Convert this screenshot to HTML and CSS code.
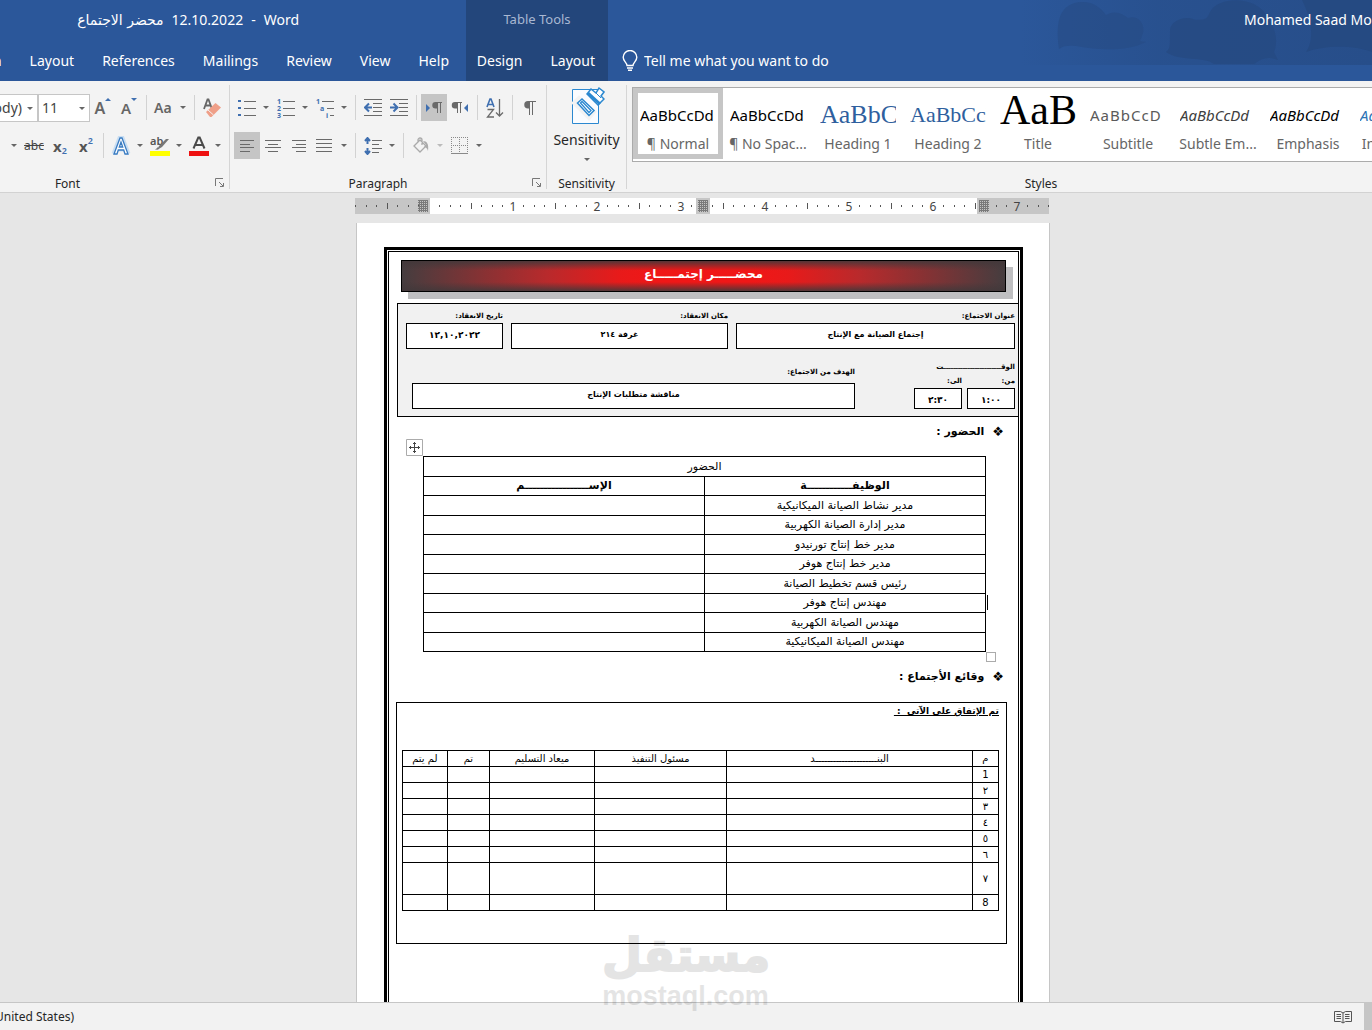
FILE: index.html
```html
<!DOCTYPE html>
<html lang="en">
<head>
    <meta charset="UTF-8">
    <meta name="viewport" content="width=device-width, initial-scale=1.0">
    <title>محضر الاجتماع 12.10.2022 - Word</title>
    <link rel="stylesheet" href="styles.css">
</head>
<body>
    <header class="header">
        <div class="header-left">
            <div class="doc-title">
                <span class="ar" dir="rtl">محضر الاجتماع</span>
                <span>12.10.2022</span>
                <span>-</span>
                <span>Word</span>
            </div>
            <nav class="tabs">
                <a href="#">Design</a>
                <a href="#">Layout</a>
                <a href="#">References</a>
                <a href="#">Mailings</a>
                <a href="#">Review</a>
                <a href="#">View</a>
                <a href="#">Help</a>
            </nav>
        </div>
        <div class="header-tools">
            <div class="tools-title">Table Tools</div>
            <nav class="tabs">
                <a href="#">Design</a>
                <a href="#">Layout</a>
            </nav>
        </div>
        <div class="header-right">
            <svg class="clouds" width="352" height="65" viewBox="0 0 352 65">
                <defs>
                    <linearGradient id="fade" x1="0" x2="1" y1="0" y2="0">
                        <stop offset="0" stop-color="#274e8a" stop-opacity="0"/>
                        <stop offset="0.4" stop-color="#274e8a" stop-opacity=".7"/>
                        <stop offset="1" stop-color="#274e8a"/>
                    </linearGradient>
                </defs>
                <rect width="352" height="65" fill="url(#fade)"/>
                <g fill="#254a82">
                    <path opacity=".5" d="M39 49C35 20 40 3 62 2c14 0 20 8 24 13 10-6 18 0 22 3 14-4 18 12 14 18-2 6-4 5 4 6-20 10-50 8-70 4-8-1-14 0-17 3z"/>
                    <path opacity=".8" d="M150 30c0-8 14-16 26-10 8-1 10 1 14-8 8-16 50-18 60 10 6 8 8 20 4 30l4 8c-10-4-16-2-24 4h-40c-10-8-34-2-48-12 4-4 4-4 4-22z"/>
                    <path d="M286 52c10-14 4-36-4-52h70v52c-20-8-50-6-66 0z"/>
                </g>
            </svg>
            <div class="user">Mohamed Saad Mohamed</div>
            <label class="tell">
                <svg width="16" height="22" viewBox="0 0 16 22" fill="none" stroke="#fff" stroke-width="1.4">
                    <path d="M5 15.500c0-3-3.800-4-3.800-8.200a6.800 6.800 0 0 1 13.600 0c0 4.200-3.800 5.200-3.800 8.200zM5 18h6M6 20.300h4"/>
                </svg>
                <input type="text" placeholder="Tell me what you want to do">
            </label>
        </div>
    </header>

    <section class="ribbon">
        <div class="group group-font">
            <div class="rows">
                <div class="tool-row">
                    <label class="combo combo-font"><select aria-label="Font"><option>Calibri (Body)</option></select><i class="caret"></i></label>
                    <label class="combo combo-size"><select aria-label="Font size"><option>11</option></select><i class="caret"></i></label>
                    <button class="tool letter" aria-label="Grow font">A<svg class="tick" width="6" height="3"><path d="M0 3L3 0l3 3z" fill="#3f6fb0"/></svg></button>
                    <button class="tool letter small" aria-label="Shrink font">A<svg class="tick" width="6" height="3"><path d="M0 0h6L3 3z" fill="#3f6fb0"/></svg></button>
                    <span class="sep"></span>
                    <button class="tool wide case">Aa<i class="caret"></i></button>
                    <span class="sep"></span>
                    <button class="tool" aria-label="Clear formatting">
                        <svg width="20" height="20" viewBox="0 0 20 20"><path d="M2 11L5.500 1.500h1L10 11M3.500 7.500h5" fill="none" stroke="#666" stroke-width="1.800"/><path d="M4 14L13.500 5l5.500 4.500-9.500 9.500H8z" fill="#ef9f88"/><path d="M6 12l5.500 5" stroke="#f3f3f3"/></svg>
                    </button>
                </div>
                <div class="tool-row">
                    <button class="tool wide under"><u>U</u><i class="caret"></i></button>
                    <button class="tool strike"><s>abc</s></button>
                    <button class="tool script">x<sub>2</sub></button>
                    <button class="tool script">x<sup>2</sup></button>
                    <span class="sep"></span>
                    <button class="tool wide" aria-label="Text effects">
                        <svg width="20" height="20" viewBox="0 0 20 20"><path d="M3 18L9 2h2l6 16M6 13h8" fill="none" stroke="#c9def2" stroke-width="5"/><path d="M3 18L9 2h2l6 16h-3l-1.300-4H7.300L6 18zM8.300 11h3.400L10 6z" fill="#fff" stroke="#3a7cc2" stroke-width="1.300"/></svg>
                        <i class="caret"></i>
                    </button>
                    <button class="tool wide" aria-label="Highlight color">
                        <svg width="20" height="20" viewBox="0 0 20 20"><text x="0" y="9" class="ico-ab">ab</text><path d="M19 3l-7 8-5 3 2-4 7-7z" fill="#777"/><path d="M5 14l3-3 1 2z" fill="#777"/><path d="M0 15h20v5H0z" fill="#ffff00"/></svg>
                        <i class="caret"></i>
                    </button>
                    <button class="tool wide" aria-label="Font color">
                        <svg width="20" height="20" viewBox="0 0 20 20"><path d="M4.500 12.500L9.300 1.500h1.400l4.800 11M6.500 9h7" fill="none" stroke="#4a4a4a" stroke-width="2"/><path d="M0 15h20v5H0z" fill="#ee1111"/></svg>
                        <i class="caret"></i>
                    </button>
                </div>
            </div>
            <div class="group-name">Font
                <svg class="launch" width="10" height="10" viewBox="0 0 10 10"><path d="M.5 8V.5H8M4 4l4 4M8.500 5v3.500H5" fill="none" stroke="#777"/></svg>
            </div>
        </div>

        <div class="group group-para">
            <div class="rows">
                <div class="tool-row">
                    <button class="tool wide" aria-label="Bullets">
                        <svg width="18" height="18" viewBox="0 0 18 18"><path d="M0 1h3v2H0zM0 8h3v2H0zM0 15h3v2H0z" fill="#3f6fb0"/><path d="M6 2.500h12M6 9.500h12M6 16.500h12" stroke="#6a6a6a"/></svg>
                        <i class="caret"></i>
                    </button>
                    <button class="tool wide" aria-label="Numbering">
                        <svg width="18" height="20" viewBox="0 0 18 20"><g class="ico-num"><text x="0" y="6">1</text><text x="0" y="13">2</text><text x="0" y="20">3</text></g><path d="M6 3.500h12M6 10.500h12M6 17.500h12" stroke="#6a6a6a"/></svg>
                        <i class="caret"></i>
                    </button>
                    <button class="tool wide" aria-label="Multilevel list">
                        <svg width="18" height="20" viewBox="0 0 18 20"><g class="ico-num"><text x="0" y="6">1</text><text x="4" y="13">a</text><text x="10" y="20">i</text></g><path d="M6 3.500h12M11 10.500h7M14 17.500h4" stroke="#6a6a6a"/></svg>
                        <i class="caret"></i>
                    </button>
                    <span class="sep"></span>
                    <button class="tool" aria-label="Decrease indent">
                        <svg width="18" height="17" viewBox="0 0 18 17"><path d="M0 .5h18M9 4.500h9M9 8.500h9M9 12.500h9M0 16.500h18" stroke="#6a6a6a"/><path d="M8 8.500H2M5 4.500l-4 4 4 4" fill="none" stroke="#3f6fb0" stroke-width="2"/></svg>
                    </button>
                    <button class="tool" aria-label="Increase indent">
                        <svg width="18" height="17" viewBox="0 0 18 17"><path d="M0 .5h18M9 4.500h9M9 8.500h9M9 12.500h9M0 16.500h18" stroke="#6a6a6a"/><path d="M0 8.500h6M3.500 4.500l4 4-4 4" fill="none" stroke="#3f6fb0" stroke-width="2"/></svg>
                    </button>
                    <span class="sep"></span>
                    <button class="tool on" aria-label="Left to right">
                        <svg width="18" height="14" viewBox="0 0 18 14"><path d="M1 3l4 4-4 4z" fill="#3f6fb0"/><path d="M13 1h-2.500a3 3 0 0 0 0 6.500H13z" fill="#6a6a6a"/><path d="M12.500 1v11M15.500 1v11M11 1.500h6" stroke="#6a6a6a"/></svg>
                    </button>
                    <button class="tool" aria-label="Right to left">
                        <svg width="18" height="14" viewBox="0 0 18 14"><path d="M17 3l-4 4 4 4z" fill="#3f6fb0"/><path d="M6 1H4a3 3 0 0 0 0 6.500h2z" fill="#6a6a6a"/><path d="M6.500 1v11M9.500 1v11M4 1.500h7" stroke="#6a6a6a"/></svg>
                    </button>
                    <span class="sep"></span>
                    <button class="tool" aria-label="Sort">
                        <svg width="18" height="20" viewBox="0 0 18 20"><path d="M1 9L4 1h1l3 8M2 6.500h5" fill="none" stroke="#3f6fb0" stroke-width="1.600"/><path d="M1.500 11.500h6l-6 7.500h6.500M13.500 1v17M10 14.500l3.500 3.500 3.500-3.500" fill="none" stroke="#6a6a6a" stroke-width="1.300"/></svg>
                    </button>
                    <span class="sep"></span>
                    <button class="tool" aria-label="Show marks">
                        <svg width="12" height="16" viewBox="0 0 12 16"><path d="M6 1H4a3.500 3.500 0 0 0 0 7.500h2z" fill="#6a6a6a"/><path d="M5.500 1v14M8.500 1v14M4 1.500h8" stroke="#6a6a6a"/></svg>
                    </button>
                </div>
                <div class="tool-row">
                    <button class="tool on" aria-label="Align left">
                        <svg width="16" height="12" viewBox="0 0 16 12"><path d="M1 .5h14M1 4.500h10M1 7.500h14M1 11.500h10" stroke="#6a6a6a"/></svg>
                    </button>
                    <button class="tool" aria-label="Center">
                        <svg width="16" height="12" viewBox="0 0 16 12"><path d="M0 .5h16M3 4.500h10M0 7.500h16M3 11.500h10" stroke="#6a6a6a"/></svg>
                    </button>
                    <button class="tool" aria-label="Align right">
                        <svg width="16" height="12" viewBox="0 0 16 12"><path d="M1 .5h14M5 4.500h10M1 7.500h14M5 11.500h10" stroke="#6a6a6a"/></svg>
                    </button>
                    <button class="tool wide" aria-label="Justify">
                        <svg width="16" height="13" viewBox="0 0 16 13"><path d="M0 .5h16M0 4.500h16M0 8.500h16M0 12.500h16" stroke="#6a6a6a"/></svg>
                        <i class="caret"></i>
                    </button>
                    <span class="sep"></span>
                    <button class="tool wide" aria-label="Line spacing">
                        <svg width="18" height="18" viewBox="0 0 18 18"><path d="M3.500 1v6M1 4l2.500-3L6 4M3.500 11v6M1 14l2.500 3L6 14" fill="none" stroke="#3f6fb0" stroke-width="2"/><path d="M8 3.500h10M8 7.500h7M8 11.500h10M8 15.500h7" stroke="#6a6a6a"/></svg>
                        <i class="caret"></i>
                    </button>
                    <span class="sep"></span>
                    <button class="tool wide dim" aria-label="Shading">
                        <svg width="18" height="18" viewBox="0 0 18 18"><path d="M2 9l6-6 6 6-6 6zM6 6V3a2 2 0 0 1 4 0v5" fill="none" stroke="#aaa" stroke-width="1.300"/><path d="M11 4c4 0 6 3 5 10-1-3-2-4-4-4l2-2z" fill="#aaa"/></svg>
                        <i class="caret"></i>
                    </button>
                    <button class="tool wide" aria-label="Borders">
                        <svg width="18" height="18" viewBox="0 0 18 18"><path d="M.5 0v17M8.500 0v17M16.500 0v17M0 .5h17M0 8.500h17" stroke="#8a8a8a" stroke-dasharray="1 1"/><path d="M0 16.500h17" stroke="#8a8a8a"/></svg>
                        <i class="caret"></i>
                    </button>
                </div>
            </div>
            <div class="group-name">Paragraph
                <svg class="launch" width="10" height="10" viewBox="0 0 10 10"><path d="M.5 8V.5H8M4 4l4 4M8.500 5v3.500H5" fill="none" stroke="#777"/></svg>
            </div>
        </div>

        <div class="group group-sens">
            <button class="big">
                <svg width="36" height="40" viewBox="0 0 36 40" fill="none" stroke="#2b88d0">
                    <path d="M3.500 3.500h26v34h-26z" fill="#fafcff"/>
                    <path d="M5 17l5-5 15 14-5 6z" fill="#fff" stroke="#f3f3f3" stroke-width="4"/>
                    <path d="M8.500 17l4.500-4 12 11.500-5 5z" fill="#fff" stroke-width="1.500"/>
                    <path d="M11.500 17l1.500-1.500 9 9-2 2z" stroke-width="1.300"/>
                    <path d="M18 8l4-5 5 4 3-5 5 4-3 4 3 3-6 6z" fill="#fff" stroke-width="1.500"/>
                    <path d="M19 7l12 11" stroke-width="3"/>
                    <path d="M27 7l5 5"/>
                </svg>
                <span>Sensitivity</span>
                <i class="caret"></i>
            </button>
            <div class="group-name">Sensitivity</div>
        </div>

        <div class="group group-styles">
            <div class="gallery">
                <button class="style on"><span class="sample">AaBbCcDd</span><span class="name">¶ Normal</span></button>
                <button class="style"><span class="sample">AaBbCcDd</span><span class="name">¶ No Spac...</span></button>
                <button class="style"><span class="sample h1">AaBbC</span><span class="name">Heading 1</span></button>
                <button class="style"><span class="sample h2">AaBbCcD</span><span class="name">Heading 2</span></button>
                <button class="style"><span class="sample ttl">AaB</span><span class="name">Title</span></button>
                <button class="style"><span class="sample sub">AaBbCcD</span><span class="name">Subtitle</span></button>
                <button class="style"><span class="sample em soft">AaBbCcDd</span><span class="name">Subtle Em...</span></button>
                <button class="style"><span class="sample em">AaBbCcDd</span><span class="name">Emphasis</span></button>
                <button class="style"><span class="sample em blue">AaBbCcDd</span><span class="name">Intense E...</span></button>
            </div>
            <div class="group-name">Styles</div>
        </div>
    </section>

    <main class="workspace">
        <svg class="ruler" width="696" height="16" viewBox="0 0 696 16">
            <defs>
                <pattern id="ticks" x="74" width="84" height="16" patternUnits="userSpaceOnUse">
                    <path d="M10.500 7v2M21.500 7v2M31.500 7v2M42.500 5v6M52.500 7v2M63.500 7v2M73.500 7v2" stroke="#555"/>
                </pattern>
                <pattern id="mesh" width="2" height="2" patternUnits="userSpaceOnUse">
                    <path d="M0 0h1v2H0zM1 0h1v1H1z" fill="#7a7a7a"/>
                </pattern>
            </defs>
            <rect width="694" height="16" fill="#c6c6c6"/>
            <rect x="75" width="266" height="16" fill="#fff"/>
            <rect x="355" width="267" height="16" fill="#fff"/>
            <rect width="694" height="16" fill="url(#ticks)"/>
            <g>
                <rect x="67" y="2" width="11" height="12" fill="#c6c6c6"/><rect x="341" width="14" height="16" fill="#c6c6c6"/><rect x="622" width="13" height="16" fill="#c6c6c6"/>
                <rect x="75" width="3" height="16" fill="#fff"/>
                <rect x="63" y="2" width="10" height="12" fill="url(#mesh)"/><rect x="343" y="2" width="10" height="12" fill="url(#mesh)"/><rect x="624" y="2" width="10" height="12" fill="url(#mesh)"/>
            </g>
            <g class="ruler-num">
                <text x="158" y="13">1</text><text x="242" y="13">2</text><text x="326" y="13">3</text><text x="410" y="13">4</text><text x="494" y="13">5</text><text x="578" y="13">6</text><text x="662" y="13">7</text>
            </g>
        </svg>

        <article class="page" lang="ar" dir="rtl">
            <div class="frame">
                <div class="frame-inner">
                    <h1 class="banner">محضـــــر إجتمـــــاع</h1>

                    <div class="info">
                        <div class="info-row">
                            <div class="field f-title"><div class="lbl">عنوان الاجتماع:</div><div class="box">إجتماع الصيانة مع الإنتاج</div></div>
                            <div class="field f-place"><div class="lbl">مكان الانعقاد:</div><div class="box">غرفة ٢١٤</div></div>
                            <div class="field f-date"><div class="lbl">تاريخ الانعقاد:</div><div class="box">١٢,١٠,٢٠٢٢</div></div>
                        </div>
                        <div class="info-row second">
                            <div class="time">
                                <div class="lbl">الوقــــــــــــــــــــــــت</div>
                                <div class="time-row">
                                    <div class="field"><div class="lbl">من:</div><div class="box">١:٠٠</div></div>
                                    <div class="field"><div class="lbl">الى:</div><div class="box">٢:٣٠</div></div>
                                </div>
                            </div>
                            <div class="field goal"><div class="lbl">الهدف من الاجتماع:</div><div class="box">مناقشة متطلبات الإنتاج</div></div>
                        </div>
                    </div>

                    <h2 class="heading"><span>❖</span>الحضور :</h2>
                    <div class="people-wrap">
                        <svg class="move" width="17" height="17" viewBox="0 0 17 17"><path d="M.5.500h16v16H.5z" fill="#fff" stroke="#ababab"/><path d="M8.500 3v11M3 8.500h11M7 4.500h3M7 12.500h3M4.500 7v3M12.500 7v3" stroke="#444"/></svg>
                        <table class="people">
                            <tr><td colspan="2">الحضور</td></tr>
                            <tr class="bold"><th>الوظيفــــــــــــة</th><th>الإســـــــــــــــــم</th></tr>
                            <tr><td>مدير نشاط الصيانة الميكانيكية</td><td></td></tr>
                            <tr><td>مدير إدارة الصيانة الكهربية</td><td></td></tr>
                            <tr><td>مدير خط إنتاج تورنيدو</td><td></td></tr>
                            <tr><td>مدير خط إنتاج هوفر</td><td></td></tr>
                            <tr><td>رئيس قسم تخطيط الصيانة</td><td></td></tr>
                            <tr><td>مهندس إنتاج هوفر</td><td></td></tr>
                            <tr><td>مهندس الصيانة الكهربية</td><td></td></tr>
                            <tr><td>مهندس الصيانة الميكانيكية</td><td></td></tr>
                        </table>
                        <i class="cursor"></i>
                        <i class="resize"></i>
                    </div>

                    <h2 class="heading"><span>❖</span>وقائع الأجتماع :</h2>
                    <div class="minutes">
                        <h3>تم الإتفاق على الآتى &nbsp;:&nbsp;</h3>
                        <table class="items">
                            <colgroup><col class="c-no"><col class="c-item"><col class="c-who"><col class="c-when"><col class="c-done"><col class="c-not"></colgroup>
                            <tr><th>م</th><th>البنـــــــــــــــــــــد</th><th>مسئول التنفيذ</th><th>ميعاد التسليم</th><th>تم</th><th>لم يتم</th></tr>
                            <tr><td>1</td><td></td><td></td><td></td><td></td><td></td></tr>
                            <tr><td>٢</td><td></td><td></td><td></td><td></td><td></td></tr>
                            <tr><td>٣</td><td></td><td></td><td></td><td></td><td></td></tr>
                            <tr><td>٤</td><td></td><td></td><td></td><td></td><td></td></tr>
                            <tr><td>٥</td><td></td><td></td><td></td><td></td><td></td></tr>
                            <tr><td>٦</td><td></td><td></td><td></td><td></td><td></td></tr>
                            <tr class="tall"><td>٧</td><td></td><td></td><td></td><td></td><td></td></tr>
                            <tr><td>8</td><td></td><td></td><td></td><td></td><td></td></tr>
                        </table>
                    </div>
                </div>
            </div>
        </article>
    </main>

    <footer class="status">
        <div class="lang">English (United States)</div>
        <div class="views">
            <button aria-label="Read mode">
                <svg width="18" height="14" viewBox="0 0 18 14" fill="none" stroke="#555"><path d="M.5 1.500h6l2.500 1.500 2.500-1.500h6v10h-6L9 13l-2.500-1.500h-6zM9 3v10M2.500 4.500H7M2.500 6.500H7M2.500 8.500H7M11 4.500h4.500M11 6.500h4.500M11 8.500h4.500"/></svg>
            </button>
            <button class="on" aria-label="Print layout"></button>
        </div>
    </footer>

    <div class="watermark">
        <div class="wm-ar" lang="ar">مستقل</div>
        <div class="wm-en">mostaql.com</div>
    </div>
</body>
</html>
```

FILE: styles.css
```css
*{
    box-sizing: border-box;
}
body{
    margin: 0;
    height: 100vh;
    display: flex;
    flex-direction: column;
    overflow: hidden;
    position: relative;
    font-family: "Noto Sans", "Open Sans", "DejaVu Sans", sans-serif;
    font-size: 14px;
    color: #262626;
    background-color: #e6e6e6;
}
button{
    font: inherit;
    color: inherit;
    border: 0;
    padding: 0;
    background: none;
}
/* header */
.header{
    display: flex;
    flex: none;
    height: 81px;
    color: #fff;
    background-color: #2b579a;
}
.header-left{
    width: 466px;
    overflow: hidden;
}
.doc-title{
    display: flex;
    justify-content: flex-end;
    align-items: center;
    gap: 8px;
    height: 39px;
    padding-right: 167px;
}
.ar{
    font-family: "DejaVu Sans", sans-serif;
}
.tabs{
    display: flex;
    justify-content: flex-end;
    align-items: center;
    gap: 28px;
    height: 43px;
    padding-right: 17px;
}
.tabs a{
    color: #fff;
    text-decoration: none;
}
.header-tools{
    width: 142px;
    background-color: #23467b;
}
.tools-title{
    height: 39px;
    line-height: 39px;
    text-align: center;
    font-size: 13px;
    color: #a9b8d2;
}
.header-tools .tabs{
    padding-right: 13px;
}
.header-right{
    position: relative;
    flex: 1;
    overflow: hidden;
}
.clouds{
    position: absolute;
    top: 0;
    right: 0;
}
.user{
    position: relative;
    height: 39px;
    line-height: 39px;
    width: 128px;
    margin-left: auto;
    white-space: nowrap;
}
.tell{
    position: relative;
    display: flex;
    align-items: center;
    gap: 6px;
    height: 43px;
    padding-left: 14px;
}
.tell input{
    width: 300px;
    padding: 0;
    border: 0;
    outline: 0;
    background: none;
    font: inherit;
    color: #fff;
}
.tell input::placeholder{
    color: #fff;
}
/* ribbon */
.ribbon{
    display: flex;
    flex: none;
    height: 112px;
    padding-top: 4px;
    overflow: hidden;
    background-color: #f3f3f3;
    border-bottom: 1px solid #d2d2d2;
}
.group{
    position: relative;
    display: flex;
    flex: none;
    flex-direction: column;
    justify-content: space-between;
    height: 104px;
    border-right: 1px solid #d5d5d5;
}
.group-font{
    width: 230px;
}
.group-para{
    width: 317px;
}
.group-sens{
    width: 80px;
}
.group-styles{
    width: 824px;
    padding-left: 5px;
}
.group-name{
    height: 14px;
    line-height: 18px;
    font-size: 12px;
    text-align: center;
}
.group-font .group-name{
    padding-right: 94px;
}
.group-para .group-name{
    padding-right: 20px;
}
.launch{
    position: absolute;
    right: 4px;
    bottom: 1px;
}
.rows{
    display: flex;
    flex-direction: column;
    gap: 11px;
    padding: 9px 4px 0;
}
.tool-row{
    display: flex;
    align-items: center;
    height: 27px;
}
.group-font .tool-row{
    justify-content: flex-end;
}
.tool{
    display: flex;
    flex: none;
    align-items: center;
    justify-content: center;
    position: relative;
    width: 26px;
    height: 27px;
    color: #666;
}
.tool.wide{
    width: 39px;
    justify-content: space-between;
    padding: 0 4px 0 3px;
}
.group-para .tool.wide{
    padding-left: 4px;
}
.tool.on{
    background-color: #c5c5c5;
}
.dim .caret{
    border-top-color: #bbb;
}
.sep{
    flex: none;
    width: 1px;
    height: 25px;
    margin: 0 4px;
    background-color: #d2d2d2;
}
.caret{
    flex: none;
    width: 0;
    height: 0;
    border: 3px solid transparent;
    border-top: 3px solid #666;
    border-bottom: 0;
}
.letter{
    font-size: 16px;
    font-weight: 600;
}
.letter.small{
    font-size: 15px;
}
.tick{
    align-self: flex-start;
    margin-top: 4px;
}
.case{
    font-size: 14px;
    font-weight: 600;
}
.strike{
    font-size: 12px;
    color: #444;
}
.script{
    font-size: 15px;
    font-weight: 700;
    color: #555;
}
.script sub, .script sup{
    font-size: 9px;
    font-weight: 600;
    line-height: 9px;
    color: #3f6fb0;
}
.script sub{
    align-self: flex-end;
    margin-bottom: 4px;
}
.script sup{
    align-self: flex-start;
    margin-top: 4px;
}
.ico-ab{
    font-size: 11px;
    font-weight: 600;
    fill: #555;
}
.ico-num{
    font-size: 7px;
    font-weight: 700;
    fill: #3f6fb0;
}
.combo{
    position: relative;
    flex: none;
    height: 28px;
}
.combo select{
    width: 100%;
    height: 100%;
    appearance: none;
    border: 1px solid #c6c6c6;
    border-radius: 0;
    background-color: #fff;
    font: inherit;
    color: #444;
}
.combo .caret{
    position: absolute;
    right: 5px;
    top: 13px;
}
.combo-font{
    width: 130px;
}
.combo-font select{
    padding-right: 15px;
    text-align-last: right;
}
.combo-size{
    width: 52px;
}
.combo-size select{
    padding-left: 3px;
}
.big{
    display: flex;
    flex-direction: column;
    align-items: center;
    width: 100%;
    padding-top: 1px;
}
.big span{
    margin: 4px 0 9px;
}
.gallery{
    display: flex;
    flex: none;
    height: 75px;
    margin-top: 2px;
    background-color: #fff;
    border: 1px solid #ababab;
}
.style{
    display: flex;
    flex: none;
    flex-direction: column;
    align-items: center;
    width: 90px;
    height: 71px;
    padding-top: 3px;
    border: 5px solid transparent;
    color: #666;
}
.style.on{
    border-color: #c6c6c6;
}
.sample{
    width: 76px;
    height: 38px;
    line-height: 38px;
    overflow: hidden;
    white-space: nowrap;
    text-align: left;
    font-size: 15px;
    color: #000;
}
.sample.h1, .sample.h2, .sample.ttl{
    font-family: "Liberation Serif", serif;
    color: #2f5f9e;
}
.sample.h1{
    font-size: 26px;
}
.sample.h2{
    font-size: 22px;
}
.sample.ttl{
    font-size: 42px;
    line-height: 28px;
    color: #000;
}
.sample.sub{
    letter-spacing: 1px;
    color: #5a5a5a;
}
.sample.em{
    font-style: italic;
}
.sample.soft{
    color: #404040;
}
.sample.blue{
    color: #2e74b5;
}
.name{
    line-height: 20px;
    white-space: nowrap;
}
/* document */
.workspace{
    flex: 1;
    min-height: 0;
    padding: 5px 0 0 34px;
    overflow: hidden;
}
.ruler{
    display: block;
    margin: 0 auto 9px;
}
.ruler-num{
    font-size: 12px;
    text-anchor: middle;
    fill: #444;
}
.page{
    width: 694px;
    min-height: 980px;
    margin: 0 auto;
    padding: 24px 26px 0 27px;
    background-color: #fff;
    border: 1px solid #c6c6c6;
    border-top: 0;
    font-family: "DejaVu Sans", sans-serif;
    color: #000;
}
.frame{
    padding: 1px;
    border: 3px solid #000;
}
.frame-inner{
    min-height: 940px;
    padding-top: 8px;
    border: 1px solid #000;
}
.banner{
    height: 32px;
    margin: 0 12px 11px;
    line-height: 27px;
    text-align: center;
    font-size: 12px;
    color: #fff;
    border: 1px solid #000;
    box-shadow: 7px 7px 0 #bfbfc1;
    background: linear-gradient(to bottom, rgba(66, 56, 58, 0.9), rgba(66, 56, 58, 0) 32%, rgba(66, 56, 58, 0) 70%, rgba(66, 56, 58, 0.9)), linear-gradient(to right, #453d3f, #8a3133 14%, #b82a2c 24%, #e81a1a 36%, #f01717 42%, #f01717 58%, #e81a1a 64%, #b82a2c 76%, #8a3133 86%, #453d3f);
}
.info{
    height: 114px;
    margin-right: -1px;
    margin-left: 8px;
    padding: 5px 3px 0 8px;
    font-size: 8px;
    font-weight: 700;
    background-color: #f1f1f1;
    border: 1px solid #000;
}
.info-row{
    display: flex;
    gap: 8px;
}
.info-row.second{
    gap: 59px;
    align-items: flex-end;
    margin-top: 11px;
    padding-left: 6px;
}
.lbl{
    height: 14px;
    line-height: 14px;
    font-size: 7px;
    white-space: nowrap;
}
.box{
    height: 26px;
    line-height: 22px;
    text-align: center;
    background-color: #fff;
    border: 1px solid #000;
}
.f-title{
    flex: 279;
}
.f-place{
    flex: 217;
}
.f-date{
    flex: 97;
}
.f-date .box, .time .box{
    font-size: 9px;
}
.time{
    width: 101px;
}
.time-row{
    display: flex;
    gap: 5px;
}
.time-row .field{
    flex: 1;
}
.time-row .box{
    height: 21px;
}
.goal{
    flex: 1;
}
.goal .lbl{
    height: 18px;
}
.heading{
    display: flex;
    align-items: center;
    gap: 8px;
    height: 29px;
    margin: 0;
    padding-right: 14px;
    font-size: 11px;
}
.heading span{
    font-size: 13px;
}
.people-wrap{
    position: relative;
    margin: 10px 32px 10px 34px;
}
.people, .items{
    width: 100%;
    border-collapse: collapse;
    table-layout: fixed;
    text-align: center;
    font-size: 11px;
}
.people{
    height: 196px;
}
.people td, .people th, .items td, .items th{
    padding: 0;
    border: 1px solid #000;
    line-height: 15px;
    font-weight: 400;
}
.people .bold th{
    font-weight: 700;
}
.move{
    position: absolute;
    top: -17px;
    left: -17px;
}
.cursor{
    position: absolute;
    top: 139px;
    right: -2px;
    width: 1px;
    height: 15px;
    background-color: #000;
}
.resize{
    position: absolute;
    top: 196px;
    right: -10px;
    width: 10px;
    height: 10px;
    background-color: #fff;
    border: 1px solid #ababab;
}
.minutes{
    height: 242px;
    margin: 11px 11px 0 7px;
    padding: 0 7px 0 5px;
    border: 1px solid #000;
}
.minutes h3{
    height: 47px;
    margin: 0;
    line-height: 17px;
    font-size: 9px;
    text-decoration: underline;
}
.items{
    font-size: 10px;
}
.items tr{
    height: 16px;
}
.items .tall{
    height: 32px;
}
.c-no{
    width: 4.4%;
}
.c-item{
    width: 41.2%;
}
.c-who{
    width: 22.2%;
}
.c-when{
    width: 17.6%;
}
.c-done{
    width: 7.1%;
}
.c-not{
    width: 7.5%;
}
/* status bar */
.status{
    display: flex;
    flex: none;
    justify-content: space-between;
    height: 28px;
    background-color: #f2f2f2;
    border-top: 1px solid #c6c6c6;
    font-size: 12px;
}
.lang{
    display: flex;
    justify-content: flex-end;
    align-items: center;
    width: 74px;
    white-space: nowrap;
}
.views{
    display: flex;
}
.views button{
    display: flex;
    align-items: center;
    justify-content: center;
    width: 42px;
}
.views .on{
    width: 8px;
    background-color: #c6c6c6;
}
/* site mark over the page */
.watermark{
    position: absolute;
    left: 602px;
    bottom: 20px;
    width: 167px;
    text-align: center;
    color: #000;
    opacity: 0.1;
}
.wm-ar{
    height: 54px;
    line-height: 54px;
    font-family: "DejaVu Sans", sans-serif;
    font-size: 46px;
    font-weight: 700;
    -webkit-text-stroke: 2px #000;
}
.wm-en{
    font-family: "Liberation Sans", sans-serif;
    font-size: 27px;
    font-weight: 700;
    line-height: 28px;
}
```
